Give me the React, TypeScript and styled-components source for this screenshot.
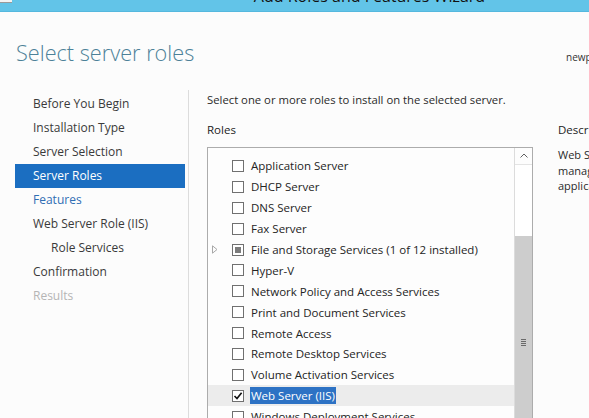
import React from "react";
import styled, { createGlobalStyle } from "styled-components";

const GlobalStyle = createGlobalStyle`
  html, body {
    margin: 0;
    padding: 0;
    overflow: hidden;
    background: #fcfcfc;
  }
  body {
    font-family: "Open Sans", "Noto Sans", sans-serif;
    color: #262626;
  }
`;

const steps = [
  { label: "Before You Begin", state: "done" },
  { label: "Installation Type", state: "done" },
  { label: "Server Selection", state: "done" },
  { label: "Server Roles", state: "current" },
  { label: "Features", state: "link" },
  { label: "Web Server Role (IIS)", state: "done" },
  { label: "Role Services", state: "done", sub: true },
  { label: "Confirmation", state: "done" },
  { label: "Results", state: "disabled" },
];

type Check = "off" | "on" | "partial";

const roles: { name: string; check: Check; expand?: boolean; selected?: boolean }[] = [
  { name: "Application Server", check: "off" },
  { name: "DHCP Server", check: "off" },
  { name: "DNS Server", check: "off" },
  { name: "Fax Server", check: "off" },
  { name: "File and Storage Services (1 of 12 installed)", check: "partial", expand: true },
  { name: "Hyper-V", check: "off" },
  { name: "Network Policy and Access Services", check: "off" },
  { name: "Print and Document Services", check: "off" },
  { name: "Remote Access", check: "off" },
  { name: "Remote Desktop Services", check: "off" },
  { name: "Volume Activation Services", check: "off" },
  { name: "Web Server (IIS)", check: "on", selected: true },
  { name: "Windows Deployment Services", check: "off" },
  { name: "Windows Server Update Services", check: "off" },
];

const App = () => {
  return (
    <Window>
      <GlobalStyle />
      <TitleBar>
        <SysMark />
        <TitleText>Add Roles and Features Wizard</TitleText>
      </TitleBar>

      <Header>
        <PageTitle>Select server roles</PageTitle>
        <ServerName>newpc.contoso.com</ServerName>
      </Header>

      <Main>
        <Sidebar>
          {steps.map((s) => (
            <Step key={s.label} $state={s.state} $sub={!!s.sub}>
              {s.label}
            </Step>
          ))}
        </Sidebar>

        <Content>
          <Intro>Select one or more roles to install on the selected server.</Intro>
          <Columns>
            <RolesCol>
              <Label>Roles</Label>
              <ListBox>
                <Rows>
                  {roles.map((r) => (
                    <Row key={r.name} $selected={!!r.selected}>
                      <Expander>
                        {r.expand && (
                          <svg width="6" height="9" viewBox="0 0 6 9">
                            <path d="M0.5 0.8 L5 4.5 L0.5 8.2 Z" fill="none" stroke="#a8a8a8" strokeWidth="1" />
                          </svg>
                        )}
                      </Expander>
                      <Box>
                        {r.check === "partial" && <Partial />}
                        {r.check === "on" && (
                          <svg width="10" height="10" viewBox="0 0 10 10">
                            <path d="M1.5 5 L4 7.6 L8.6 1.8" fill="none" stroke="#111" strokeWidth="1.6" />
                          </svg>
                        )}
                      </Box>
                      <RoleName $selected={!!r.selected}>{r.name}</RoleName>
                    </Row>
                  ))}
                </Rows>
                <ScrollBar>
                  <ScrollUp>
                    <svg width="8" height="5" viewBox="0 0 8 5">
                      <path d="M0.5 4.5 L4 1 L7.5 4.5" fill="none" stroke="#606060" strokeWidth="1" />
                    </svg>
                  </ScrollUp>
                  <Track />
                  <Thumb>
                    <Grip />
                  </Thumb>
                </ScrollBar>
              </ListBox>
            </RolesCol>

            <DescCol>
              <Label>Description</Label>
              <DescText>
                Web Server (IIS) provides a reliable,
                <br />
                manageable, and scalable Web
                <br />
                application infrastructure.
              </DescText>
            </DescCol>
          </Columns>
        </Content>
      </Main>
    </Window>
  );
};

const Window = styled.div`
  width: 589px;
  height: 418px;
  overflow: hidden;
  background: #fcfcfc;
`;

const TitleBar = styled.div`
  position: relative;
  height: 12px;
  background: #62c4e8;
  border-bottom: 1px solid #55b8de;
  box-sizing: border-box;
  display: flex;
  align-items: flex-end;
  justify-content: center;
  padding-left: 150px;
  overflow: hidden;
`;

const SysMark = styled.div`
  position: absolute;
  left: 0;
  top: 0;
  width: 12px;
  height: 2px;
  background: #f4f4f4;
  border-bottom: 1px solid #9a9a9a;
`;

const TitleText = styled.div`
  font-family: "Open Sans", sans-serif;
  font-size: 16px;
  line-height: 16px;
  margin-bottom: 7px;
  color: #111;
  white-space: nowrap;
`;

const Header = styled.div`
  height: 78px;
  box-sizing: border-box;
  padding: 26px 0 0 16px;
  display: flex;
  justify-content: space-between;
  align-items: flex-start;
`;

const PageTitle = styled.h1`
  margin: 0;
  font-family: "Open Sans", sans-serif;
  font-weight: 300;
  font-size: 21.7px;
  line-height: 30px;
  color: #4c8198;
  white-space: nowrap;
`;

const ServerName = styled.div`
  margin-top: 12px;
  font-size: 10px;
  line-height: 14px;
  color: #333;
  white-space: nowrap;
  width: 23px;
  overflow: hidden;
`;

const Main = styled.div`
  display: flex;
  height: 328px;
`;

const Sidebar = styled.nav`
  width: 189px;
  flex-shrink: 0;
  border-right: 1px solid #dcdcdc;
  padding: 2px 0 0 15px;
  box-sizing: border-box;
`;

const stepColor: Record<string, string> = {
  done: "#3a3a3a",
  current: "#ffffff",
  link: "#2f6eb4",
  disabled: "#b5b5b5",
};

const Step = styled.div<{ $state: string; $sub: boolean }>`
  width: 170px;
  height: 24px;
  line-height: 24px;
  box-sizing: border-box;
  padding-left: ${(p) => (p.$sub ? 36 : 18)}px;
  font-size: 12px;
  white-space: nowrap;
  color: ${(p) => stepColor[p.$state]};
  background: ${(p) => (p.$state === "current" ? "#1b6ec1" : "transparent")};
`;

const Content = styled.div`
  flex: 1;
  padding-left: 18px;
  min-width: 0;
`;

const Intro = styled.div`
  font-size: 11.3px;
  line-height: 20px;
  color: #2a2a2a;
  white-space: nowrap;
`;

const Columns = styled.div`
  display: flex;
  gap: 25px;
  margin-top: 10px;
`;

const RolesCol = styled.div`
  width: 326px;
  flex-shrink: 0;
`;

const Label = styled.div`
  font-size: 11.5px;
  line-height: 20px;
  color: #1c1c1c;
  white-space: nowrap;
`;

const ListBox = styled.div`
  margin-top: 7px;
  height: 300px;
  border: 1px solid #acacac;
  display: flex;
  background: #fdfdfd;
`;

const Rows = styled.div`
  flex: 1;
  padding-top: 7.5px;
`;

const Row = styled.div<{ $selected: boolean }>`
  height: 20.9px;
  display: flex;
  align-items: center;
  background: ${(p) => (p.$selected ? "#ececec" : "transparent")};
`;

const Expander = styled.div`
  width: 24px;
  height: 9px;
  padding-left: 4px;
  box-sizing: border-box;
  display: flex;
  align-items: center;
`;

const Box = styled.div`
  width: 12px;
  height: 12px;
  box-sizing: border-box;
  border: 1px solid #707070;
  background: #fff;
  display: flex;
  align-items: center;
  justify-content: center;
  flex-shrink: 0;
`;

const Partial = styled.div`
  width: 6px;
  height: 6px;
  background: #7c7c7c;
`;

const RoleName = styled.span<{ $selected: boolean }>`
  margin-left: ${(p) => (p.$selected ? 6 : 7)}px;
  padding: ${(p) => (p.$selected ? "1px 1px" : "0")};
  font-size: 11.5px;
  line-height: 15px;
  white-space: nowrap;
  color: ${(p) => (p.$selected ? "#fff" : "#242424")};
  background: ${(p) => (p.$selected ? "#2d72c4" : "transparent")};
`;

const ScrollBar = styled.div`
  width: 18px;
  flex-shrink: 0;
  border-left: 1px solid #dcdcdc;
  box-sizing: border-box;
  display: flex;
  flex-direction: column;
`;

const ScrollUp = styled.div`
  height: 16px;
  display: flex;
  align-items: center;
  justify-content: center;
  border-bottom: 1px solid #e4e4e4;
`;

const Track = styled.div`
  height: 72px;
  background: #fff;
`;

const Thumb = styled.div`
  height: 214px;
  background: #cdcdcd;
  display: flex;
  align-items: center;
  justify-content: center;
`;

const Grip = styled.div`
  width: 5px;
  height: 7px;
  background: repeating-linear-gradient(#6a6a6a 0 1px, transparent 1px 2px);
`;

const DescCol = styled.div`
  width: 200px;
  flex-shrink: 0;
`;

const DescText = styled.div`
  margin-top: 7px;
  font-size: 11px;
  line-height: 15.5px;
  color: #2a2a2a;
  white-space: nowrap;
`;

export default App;
